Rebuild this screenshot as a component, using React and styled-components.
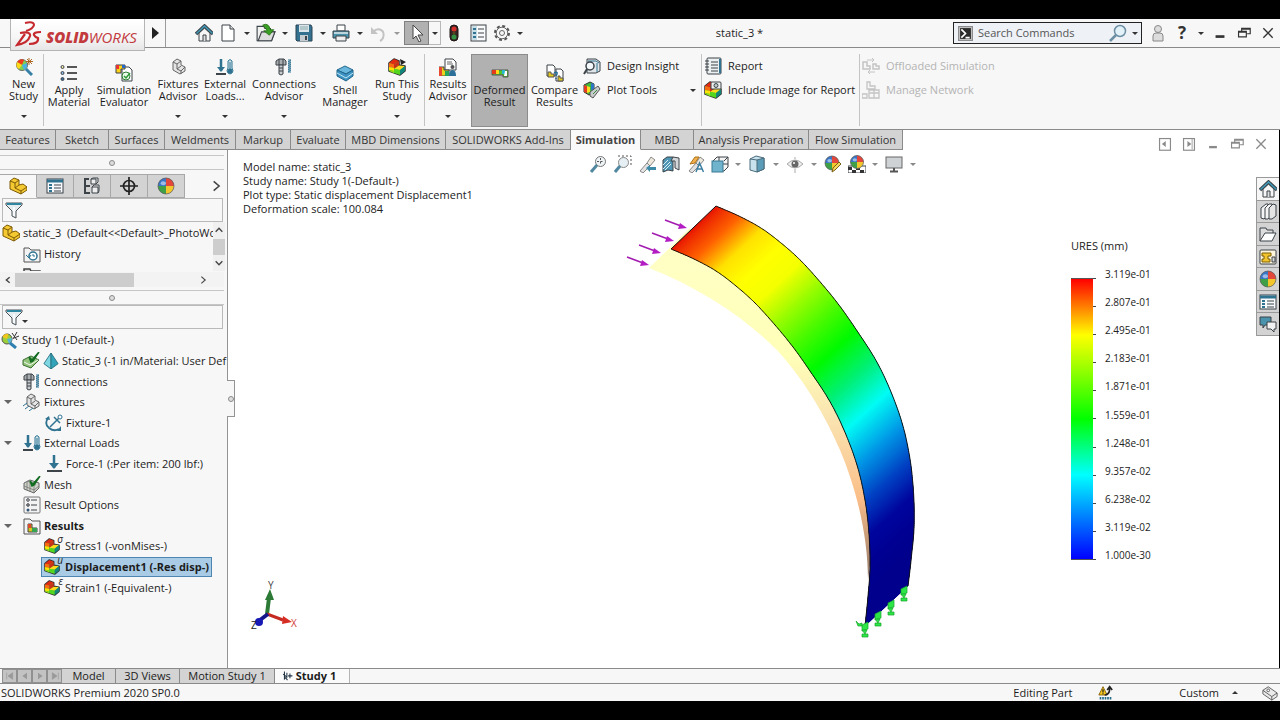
import React from "react";
import styled, { createGlobalStyle, css } from "styled-components";

const Global = createGlobalStyle`
  * { box-sizing: border-box; }
  body { margin: 0; background: #000; color: #1c1c1c; font-family: "Open Sans", "Noto Sans", sans-serif; font-size: 11px; line-height: 12px; }
  button, input { font: inherit; color: inherit; margin: 0; padding: 0; border: 0; background: none; }
  h1, p, ul { margin: 0; padding: 0; font: inherit; list-style: none; }
  svg { display: block; flex: none; }
`;

/* ---------- icons ---------- */

const K = "#3c4349";
const B = "#2f7391";
const rainbowCube = (
  <>
    <path d="M1 5L6 1l5 2v4l6 1v5l-5 4-11-4z" fill="#39c23a" stroke="#2c2c2c" strokeWidth="1.500" strokeLinejoin="round" />
    <path d="M1 5L6 1l5 2-5 3.500z" fill="#e02a12" />
    <path d="M1 5l5 1.500V10l-5-1z" fill="#ff6a10" />
    <path d="M1 9l5 1v3l-5-1z" fill="#ffe000" />
    <path d="M1 12l5 1v2.200L1 13z" fill="#8fdc1a" />
    <path d="M6 6.500L11 3v4.500L6 11z" fill="#c9301a" />
    <path d="M6 11l5-3.500 6 .5-5 4z" fill="#ffd91c" />
    <path d="M6 11l6 1v5l-6-2z" fill="#55d61e" />
    <path d="M12 12l5-4v5l-5 4z" fill="#12867a" />
  </>
);
const ball = (cx, cy, r) => (
  <>
    <circle cx={cx} cy={cy} r={r} fill="#e8e8e8" />
    <path d={`M${cx} ${cy}V${cy - r}A${r} ${r} 0 0 0 ${cx - r} ${cy}Z`} fill="#3a76c8" />
    <path d={`M${cx} ${cy}V${cy - r}A${r} ${r} 0 0 1 ${cx + r} ${cy}Z`} fill="#e3463a" />
    <path d={`M${cx} ${cy}V${cy + r}A${r} ${r} 0 0 1 ${cx - r} ${cy}Z`} fill="#3fa047" />
    <path d={`M${cx} ${cy}V${cy + r}A${r} ${r} 0 0 0 ${cx + r} ${cy}Z`} fill="#f3c62e" />
    <ellipse cx={cx - r / 3} cy={cy - r / 3} rx={r / 3} ry={r / 4} fill="#fff" opacity=".5" />
    <circle cx={cx} cy={cy} r={r} fill="none" stroke="#555" strokeWidth=".7" />
  </>
);
const bolt = (
  <>
    <path d="M1 3l3-2h5l2 2v4H1z" fill="#a9adb0" stroke={K} />
    <path d="M4 7h4v9l-2 1-2-1z" fill="#c9cccf" stroke={K} />
    <path d="M4 10h4M4 13h4M4 1v6M8 1v6" stroke={K} />
    <path d="M13 2h3l-3 2h3l-3 2h3l-3 2h3l-3 2h3l-3 2h3l-3 2h3" stroke={B} fill="none" />
  </>
);
const loads = (
  <>
    <path d="M5 1v12" stroke={B} strokeWidth="2.500" />
    <path d="M1 9h8l-4 5z" fill={B} />
    <path d="M0 16h10" stroke={K} strokeWidth="2" />
    <path d="M12 3q2-3 4 0v7q2 3 0 5t-4 0q-2-2 0-5z" fill="#cfe3ec" stroke={B} />
    <circle cx="14" cy="13" r="2.500" fill={B} />
    <path d="M14 4v9" stroke={B} />
  </>
);
const fixtures = (
  <>
    <path d="M4 4l4-3 4 2v4l4 2v4l-5 3-7-4z" fill="#e4e4e4" stroke="#666" />
    <path d="M4 4l4 2v5l4 2 4-4M8 6l4-3M8 11l4-3M12 13v3" fill="none" stroke="#666" />
  </>
);
const part = (
  <>
    <path d="M1 4l4-3 5 2v5l4-1 4 3v3l-6 4-11-5z" fill="#f4c932" stroke="#7d5a06" strokeLinejoin="round" />
    <path d="M1 4l5 2 4-3M6 6v5l6 3 6-4M6 11l4-3M12 14v3" fill="none" stroke="#7d5a06" />
  </>
);
const listDots = (
  <>
    <path d="M7 3h10M7 9h10M7 15h10" stroke="#222" strokeWidth="1.500" />
    <circle cx="2.500" cy="3" r="1.500" fill="#f5e5a0" stroke={K} />
    <circle cx="2.500" cy="9" r="1.500" fill="#8cb6de" stroke={K} />
    <circle cx="2.500" cy="15" r="1.500" fill="#356a9b" stroke={K} />
  </>
);
const sheet = (
  <>
    <rect x="1" y="2" width="16" height="14" fill="#f6fafc" stroke={K} />
    <path d="M1 4h16" stroke={B} strokeWidth="3" />
    <path d="M3 8h3M3 11h3M3 14h3" stroke={B} strokeWidth="2" />
    <path d="M8 8h7M8 11h7M8 14h7" stroke={K} />
  </>
);
const funnel = (
  <>
    <path d="M1 2h16v2l-6 6v7l-4-2v-5L1 4z" fill="#e4ecef" stroke="#4c5256" />
    <path d="M2 2h14v2H2z" fill="#2f86a0" />
    <path d="M9 6v9" stroke="#fff" strokeWidth="1.500" />
  </>
);
const house = (
  <>
    <path d="M4 9v8h11V9L9.500 4z" fill="#f6f6f6" stroke={K} />
    <path d="M1 10l8.500-8 8.500 8" fill="none" stroke={K} strokeWidth="3.500" />
    <path d="M1.500 9.500l8-7.500 8 7.500" fill="none" stroke="#3f9ab8" strokeWidth="1.500" />
    <path d="M8 17v-6h3v6" fill="#ddd" stroke={K} />
  </>
);
const meshBox = (
  <>
    <path d="M1 7l6-3 9 3v5l-5 5-10-4z" fill="#cfd2c8" stroke="#666" />
    <path d="M1 10l10 4 5-4M4 6v8M7 7v9M11 9v8M4 5l9 4" stroke="#777" strokeWidth=".8" fill="none" />
  </>
);
const check = <path d="M7 5l3 3 7-8-6 9-2 1z" fill="#1e9a32" stroke="#126b20" strokeWidth="1.500" />;
const beam = (
  <>
    <path d="M2 16l7-8 3 3-7 7z" fill="#e2e2e2" stroke="#888" />
    <path d="M9 8l4-6 4 3-5 6z" fill="#efe8dc" stroke="#888" />
  </>
);

const shapes = {
  home: house,
  newDoc: <><path d="M3 1h8l4 4v12H3z" fill="#fff" stroke={K} /><path d="M11 1v4h4" fill="#ddd" stroke={K} /></>,
  open: <><path d="M1 15V3h6l1 2h5v3h4l-3 8H1z" fill="#f2f2f0" stroke={K} /><path d="M2 16l3-8h12l-3 8z" fill="#ddd" stroke={K} /><path d="M6 2q5-3 7 4h3l-4 5-5-4h3q-1-3-4-5z" fill="#3aa024" stroke="#256b15" strokeWidth=".7" /></>,
  save: <><path d="M1 1h15l1 2v14H2l-1-1z" fill="#33718f" stroke="#2b4555" /><path d="M4 1h10v7H4z" fill="#dce6ea" /><path d="M5 3h8M5 5h8" stroke="#8aa" /><path d="M5 11h8v6H5z" fill="#c6cdd0" /><path d="M10 12h2v4h-2z" fill={K} /></>,
  print: <><path d="M5 1h8v6H5z" fill="#fff" stroke={K} /><path d="M1 7h16v7H1z" fill="#4a93ac" stroke={K} /><path d="M2 8h14v2H2z" fill="#bcd5dd" /><path d="M4 12h10v5H4z" fill="#eee" stroke={K} /></>,
  undo: <><path d="M4 8q4-4 8-2t2 8q-1 2-3 3" fill="none" stroke="#c3c3c3" strokeWidth="2" /><path d="M2 3v7h7z" fill="#c3c3c3" /></>,
  cursor: <path d="M5 1v14l3-3 3 6 2-1-3-6h5z" fill="#fff" stroke="#444" />,
  traffic: <><rect x="5" y="1" width="8" height="16" rx="4" fill="#352626" stroke="#201515" /><circle cx="9" cy="5" r="2.500" fill="#d3302c" /><circle cx="9" cy="9" r="1.500" fill="#574522" /><circle cx="9" cy="13" r="2.500" fill="#329142" /></>,
  options: <><rect x="2" y="1" width="15" height="16" fill="#f8fafb" stroke={K} /><path d="M3 2h5v14H3z" fill="#c8dee6" /><path d="M4 5h3M4 9h3M4 13h3" stroke={B} strokeWidth="2" /><path d="M9 5h6M9 9h6M9 13h6" stroke={K} /></>,
  gear: <><circle cx="9" cy="9" r="7" fill="none" stroke="#555" strokeWidth="2" strokeDasharray="3 2.498" /><circle cx="9" cy="9" r="5.800" fill="#f7f7f7" stroke="#666" /><circle cx="9" cy="9" r="2.500" fill="#f7f7f7" stroke="#666" /></>,
  prompt: <><rect x="0" y="0" width="18" height="18" fill="#8c8c8c" /><rect x="2" y="2" width="14" height="14" fill="#2a2a2a" stroke="#ddd" /><path d="M4 4l5 5-5 5M9 14h5" stroke="#fff" strokeWidth="2" fill="none" /></>,
  lens: <><circle cx="11" cy="7" r="5.500" fill="#e3f1f8" stroke="#6d8fa4" strokeWidth="1.500" /><path d="M7 11l-6 6" stroke="#6d8fa4" strokeWidth="2.500" /></>,
  user: <><circle cx="9" cy="5" r="3.500" fill="#ddd" stroke="#888" /><path d="M4 17v-5q0-3 3-3h4q3 0 3 3v5z" fill="#ddd" stroke="#888" /></>,
  minimize: <path d="M4 13h10" stroke="currentColor" strokeWidth="3" />,
  restore: <path d="M6 6V3h11v7h-4M2 7h10v7H2z M2 8h10M6 4h11" fill="none" stroke="currentColor" strokeWidth="1.500" />,
  close: <path d="M3 3l12 12M15 3L3 15" stroke="currentColor" strokeWidth="1.700" />,
  dockLeft: <><rect x="2" y="2" width="14" height="15" fill="none" stroke="currentColor" strokeWidth="1.500" /><path d="M5 9l5-4v8z" fill="currentColor" /></>,
  dockRight: <><rect x="2" y="2" width="14" height="15" fill="none" stroke="currentColor" strokeWidth="1.500" /><path d="M12 9L7 5v8z" fill="currentColor" /><path d="M13 2v14" stroke="currentColor" /></>,
  newStudy: <><circle cx="7" cy="7" r="5.500" fill="#7fd04f" stroke="#6b6b6b" /><path d="M7 7L2 4q3-4 7-2z" fill="#f33b1c" /><path d="M7 7l5-2q1 5-3 7z" fill="#4ab2e0" /><path d="M7 7L2 4q-2 5 2 7z" fill="#ffd91a" /><path d="M11 11l6 6" stroke="#3680a8" strokeWidth="3" /><path d="M14 0v7M11 3.500h7M12 1l5 5M17 1l-5 5" stroke="#a65b12" strokeWidth=".9" /></>,
  material: listDots,
  evaluator: <><path d="M7 3h7l3 3v11H7z" fill="#fff" stroke={K} /><path d="M1 1h9v4H6v4H1z" fill="#ffd21a" stroke={K} /><path d="M1 1h3v4H1z" fill="#e33" /><path d="M7 1h3v3H7z" fill="#2668c8" /><circle cx="11" cy="12" r="4" fill="#eafbe9" stroke="#2d7a35" /><path d="M9 12l2 2 4-5" stroke="#2d9a35" fill="none" strokeWidth="1.500" /></>,
  fixtures,
  loads,
  bolt,
  shell: <><path d="M1 6l8-4 8 4-7 4z" fill="#69b7dd" stroke="#22668c" /><path d="M1 6v6l9 5 7-5V6l-7 4z" fill="#3d93c1" stroke="#22668c" /><path d="M1 9l9 5 7-5" fill="none" stroke="#c3e6f6" /></>,
  run: <>{rainbowCube}<path d="M12 1l6 3-5 3z" fill="#222" /></>,
  advisor: <><path d="M6 1h8l3 3v8H6z" fill="#fff" stroke={K} /><path d="M8 4h5M8 6h6" stroke="#666" /><path d="M0 9h5v3h5v6H0z" fill="#e9d51c" stroke="#444" /><path d="M0 9h3v9H0z" fill="#e8492e" /><path d="M6 13h4v5H6z" fill="#29a35b" /><circle cx="13.500" cy="9" r="2" fill="#555" /><path d="M10 18q0-6 3.500-6t3.500 6z" fill="#2c6f9a" /></>,
  deformed: <><path d="M1 6h16v7h-5v-2H1z" fill="#4fc22d" stroke="#555" /><path d="M1 6h4v4H1z" fill="#e33a1c" /><path d="M5 6h3v4H5z" fill="#ffd91a" /><path d="M11 6h3v4h-3z" fill="#28b9cf" /><path d="M14 7h2v5h-3z" fill="#fff" /></>,
  compare: <><path d="M1 1h6l2 2v9H1z" fill="#fff" stroke={K} /><path d="M10 5h5l2 2v10h-7z" fill="#fff" stroke={K} /><path d="M2 8h3v2h3v3H2z" fill="#e5c81c" stroke="#555" /><path d="M12 12h2v2h3v3h-5z" fill="#e5c81c" stroke="#555" /><path d="M8 9q4-2 3 1l-1 2M10 14v1" stroke="#226f9b" fill="none" strokeWidth="1.500" /></>,
  insight: <><path d="M4 2h9l4 3v9l-4 2H4z" fill="#dfe5e8" stroke={K} /><path d="M5 4h8l3 2M14 6v9" stroke={B} fill="none" /><circle cx="7" cy="9" r="4" fill="#f3f8fb" stroke={K} strokeWidth="1.500" /><path d="M4 12l-3 5" stroke={K} strokeWidth="2" /></>,
  plotTools: <><path d="M1 4l6-3 4 2v7l-5 4-5-3z" fill="#42b93b" stroke="#333" /><path d="M1 4l3 1v7l-3-1z" fill="#e33b21" /><path d="M4 5l3 1v5l-3 1z" fill="#f9de22" /><path d="M8 2l3 1v6H8z" fill="#2f77c4" /><path d="M7 11l8-6 2 3-7 9-3-2z" fill="#c8cccd" stroke="#555" /><path d="M10 13l4-4" stroke="#3a8a3a" /></>,
  report: <><rect x="3" y="1" width="14" height="16" rx="1" fill="#ecf0f1" stroke={K} /><path d="M1 4h4M1 7h4M1 10h4M1 13h4" stroke={K} /><path d="M7 5h7M7 8h7M7 11h7M7 14h7" stroke={K} /><path d="M16 2v14" stroke={B} strokeWidth="2" /></>,
  image: <>{rainbowCube}<rect x="7" y="1" width="10" height="7" rx="1" fill="#eee" stroke={K} /><circle cx="12" cy="4.500" r="2" fill="#bcc" stroke={K} /></>,
  offload: <><path d="M1 5h4v4h3v3H1zM11 7h3v2h3v3h-6z" fill="none" stroke="#c4c4c4" strokeWidth="1.500" /><path d="M5 3h7M10 1l2 2-2 2M13 15H6M8 13l-2 2 2 2" stroke="#c4c4c4" fill="none" /></>,
  network: <><path d="M5 1h3v4h5v3H5zM7 9h10v3H7zM7 12h10v5H7zM12 9v8M0 13h5v4H0z" fill="none" stroke="#c4c4c4" strokeWidth="1.300" /></>,
  part,
  properties: sheet,
  config: <><path d="M2 1v16M2 2h4M2 9h5M2 16h5" stroke={K} strokeWidth="2" fill="none" /><path d="M8 2h5v5H8zM9 10h6v6H9zM8 2l2-1h5v4l-2 2M9 10l2-2h5v6l-1 2" fill="#eee" stroke={K} /></>,
  target: <><circle cx="9" cy="9" r="5.500" fill="none" stroke="#222" strokeWidth="1.700" /><path d="M9 0v18M0 9h18" stroke="#222" strokeWidth="1.700" /></>,
  ball: ball(9, 9, 8),
  funnel,
  history: <><path d="M1 3h5l2 2h9v12H1z" fill="#f3f3f3" stroke="#555" /><circle cx="10" cy="11" r="4" fill="#fff" stroke={B} strokeWidth="1.500" /><path d="M10 9v2h2M3 10l3 3 2-3" stroke={B} fill="none" /></>,
  folder: <><path d="M1 3h6l1 2h9v12H1z" fill="#ddd" stroke="#444" strokeWidth="1.500" /></>,
  study: <><circle cx="6" cy="8" r="5" fill="#9bd03a" stroke="#555" /><path d="M6 8L1.500 6q2-4 6-3z" fill="#f1c61c" /><path d="M6 8l5-1q0 4-3 5.500z" fill="#58b6d8" /><path d="M9 12l6 5" stroke="#2f7fb0" strokeWidth="3" /><path d="M11 2l5 7M16 1l-4 7M13 7l5-2" stroke="#333" /></>,
  solid: <><path d="M1 8l8-4 8 4-8 8-8-3z" fill="#93c47b" stroke="#3c6f33" /><path d="M2 10l6 3 8-5" fill="none" stroke="#f0f7ec" />{check}</>,
  tetra: <><path d="M9 0L1 12l8 6z" fill="#7fd6e3" stroke="#26707f" /><path d="M9 0l8 12-8 6z" fill="#34a3ba" stroke="#26707f" /></>,
  fixtureTree: <>{fixtures}<path d="M0 13l4-3M2 16l4-3M6 18l4-3" stroke={B} /></>,
  anchor: <><path d="M3 4q-4 6 1 10t10 1" stroke={B} fill="none" strokeWidth="1.800" /><path d="M0 5l4-3 1 4zM16 12v5h-4z" fill={B} /><path d="M5 13L15 3M9 3l6 6" stroke={B} strokeWidth="1.500" /><circle cx="15" cy="3" r="2" fill="#fff" stroke={B} /></>,
  force: <><path d="M9 0v13" stroke={B} strokeWidth="2.500" /><path d="M4 8l5 6 5-6z" fill={B} /><path d="M2 16h15" stroke={K} strokeWidth="2" /></>,
  mesh: <>{meshBox}{check}</>,
  resultOptions: <><rect x="1" y="1" width="16" height="16" rx="1" fill="#f3f3f3" stroke="#777" /><path d="M8 4h6M8 9h6M8 14h6" stroke={K} /><circle cx="5" cy="4" r="1.300" fill="#eee" stroke={K} /><circle cx="5" cy="9" r="1.300" fill="#aaa" stroke={K} /><circle cx="5" cy="14" r="1.500" fill="#357" /></>,
  results: <><path d="M1 2h6l2 2h8v13H1z" fill="#f3f3f3" stroke="#555" /><path d="M5 7h4v4h5v4H5z" fill="#d6c51f" stroke="#444" /><path d="M5 7h3v4H5z" fill="#de4b28" /><path d="M9 11h5v4H9z" fill="#37a454" /></>,
  cube: rainbowCube,
  zoomFit: <><circle cx="11.500" cy="6.500" r="5" fill="#eef3f5" stroke="#777" /><path d="M11.500 3v7M8 6.500h7" stroke="#555" strokeDasharray="2 1.500" /><path d="M8 10l-6 7" stroke="#52889f" strokeWidth="3" /></>,
  zoomArea: <><circle cx="9.500" cy="7.500" r="5" fill="#e6eff4" stroke="#888" /><path d="M6 11l-5 6" stroke="#52889f" strokeWidth="3" /><path d="M4 1h13v11" stroke="#555" strokeDasharray="2 2" fill="none" /></>,
  prevView: <>{beam}<path d="M8 13l4-3v2h6v3h-6v2z" fill="#3c89a8" /></>,
  section: <><path d="M1 5l4-3 6 0v14l-5-1-5 2z" fill="#4f97b4" stroke={K} /><path d="M11 2l6 1v12l-4-2V6l-4 0z" fill="#d4d7d9" stroke={K} /><path d="M1 10l5-5M1 14l7-7M3 15l6-6" stroke="#d9edf5" /></>,
  annotate: <>{beam}<path d="M3 9l5-7h4L8 8z" fill="#f0b24e" stroke="#b07214" /><path d="M9 17l3.500-9 4 9M10.500 14h5" stroke="#3c7fa0" strokeWidth="1.500" fill="none" /></>,
  orient: <><path d="M2 6l4-4h11v10l-4 4H2z" fill="#f4f4f4" stroke={K} /><path d="M17 2l-4 4M8 2v4M6 9h11" stroke={K} /><rect x="1" y="6" width="11" height="11" fill="#6fb3cd" stroke="#3a7893" /></>,
  display: <><path d="M2 4l6-3 8 2v11l-7 3-7-2z" fill="#c9e3ee" stroke="#4a6b7b" /><path d="M9 5l7-2v11l-7 3z" fill="#5b9db8" stroke="#4a6b7b" /><path d="M2 4l7 1" stroke="#4a6b7b" /></>,
  eye: <><path d="M1 9q8-8 16 0-8 8-16 0z" fill="#eee" stroke="#aaa" /><circle cx="9" cy="9" r="3.500" fill="#666" /><circle cx="8" cy="8" r="1" fill="#fff" /><path d="M9 2v2M9 14v4" stroke="#aaa" /></>,
  appearance: <>{ball(8, 8, 7)}<path d="M8 17l1-4 6-6 2 2-6 6z" fill="#f5d75b" stroke="#7a6017" /></>,
  scene: <><path d="M0 11h18v7H0z" fill="#fff" stroke={K} /><path d="M0 12h4v3H0zM8 12h4v3H8zM4 15h4v3H4zM12 15h4v3h-4z" fill="#333" />{ball(9, 7, 6.5)}</>,
  monitor: <><rect x="1" y="2" width="16" height="11" fill="#cfd2d4" stroke="#666" /><path d="M9 13v3M5 16.500h8" stroke="#555" strokeWidth="2" /></>,
  library: <><path d="M2 6l5-4 2 0v11l-4 4-3-1z" fill="#f4f4f4" stroke={K} /><path d="M6 6l4-4h3v11l-4 4H6z" fill="#f4f4f4" stroke={K} /><path d="M10 6l4-4 3 1v11l-4 3h-3z" fill="#e4e4e4" stroke={K} /></>,
  openFolder: <><path d="M1 16V3h6l1 2h6v3" fill="#ddd" stroke={K} /><path d="M1 16l5-8h11l-4 8z" fill="#fff" stroke={K} /></>,
  palette: <><rect x="1" y="2" width="16" height="14" rx="1" fill="#fdf6dd" stroke={K} /><path d="M3 5h9v3H9v3h2v3H3v-3h2V8H3z" fill="#f2c52e" stroke="#7a5c00" /><path d="M13 9h3v5h-3z" fill="#d8d8d8" stroke={K} /></>,
  chat: <><path d="M1 2h11v8H6l-2 3v-3H1z" fill="#4a93ac" stroke={K} /><path d="M8 7h9v7h-2v3l-3-3H8z" fill="#f1f1f1" stroke={K} /></>,
  alert: <><path d="M1 12L6 2l5 10z" fill="#f8c81c" stroke="#7a5700" /><path d="M6 5v4M6 10v1" stroke="#222" strokeWidth="1.500" /><path d="M8 12q6 0 6-8M11 6l3-4 3 4" fill="none" stroke="#222" strokeWidth="2" /><path d="M2 16h14" stroke="#256b8a" strokeWidth="3" strokeDasharray="2 1" /></>,
  tag: <><path d="M1 6l6-4 10 7v4l-6 4L1 10z" fill="#eaeaea" stroke="#555" /><path d="M1 6l10 7 6-4M11 13v4" fill="none" stroke="#555" /><circle cx="7" cy="6" r="1.500" fill="#fff" stroke="#555" /></>,
  spark: <path d="M4 1v12l2-2 3 4M2 5l6 5M8 3v8M13 4v8M10 8h7" stroke="#234" strokeWidth="1.700" fill="none" />,
  chevronR: <path d="M6 3l7 6-7 6" fill="none" stroke="#444" strokeWidth="2" />,
  chevronL: <path d="M12 4L6 9l6 5" fill="none" stroke="#444" strokeWidth="2.500" />,
  chevronU: <path d="M3 12l6-6 6 6" fill="none" stroke="#444" strokeWidth="2.500" />,
  chevronD: <path d="M3 6l6 6 6-6" fill="none" stroke="#444" strokeWidth="2.500" />,
  first: <path d="M4 4v10M13 4v10L6 9z" fill="#999" stroke="#999" />,
  prev: <path d="M12 4v10L5 9z" fill="#999" />,
  next: <path d="M6 4v10l7-5z" fill="#999" />,
  last: <path d="M14 4v10M5 4v10l7-5z" fill="#999" stroke="#999" />,
};

const Icon = ({ name, size = 18 }) => (
  <svg width={size} height={size} viewBox="0 0 18 18" fill="none" aria-hidden="true">{shapes[name]}</svg>
);

const Caret = styled.span`
  width: 0; height: 0; flex: none;
  border: 3px solid transparent;
  border-bottom-width: 0;
  border-top-color: ${(p) => p.$color || "#333"};
`;

/* ---------- frame ---------- */

const Screen = styled.div`
  min-height: 100vh; padding: 19px 0; background: #000;
  display: flex; flex-direction: column;
`;
const Window = styled.div`
  flex: 1; background: #f7f7f7; display: flex; flex-direction: column;
`;

/* ---------- title bar ---------- */

const TitleBar = styled.header`
  position: relative; height: 29px; display: flex; align-items: center;
  border-bottom: 1px solid #8a8a8a;
`;
const Brand = styled.div`
  position: relative; z-index: 1; align-self: flex-start; flex: none;
  width: 135px; height: 32px; margin-left: 10px; padding-left: 4px;
  display: flex; align-items: center; gap: 3px;
  background: linear-gradient(#fff, #f6f6f6 60%, #e6e6e6);
  border: 1px solid #b4b4b4; border-top: 0;
`;
const BrandName = styled.span`
  padding-top: 4px; font-style: italic; font-size: 15px; line-height: 20px; color: #c23a3e;
  b { font-weight: 800; }
`;
const MenuArrow = styled.button`
  width: 21px; height: 28px; border-right: 1px solid #9a9a9a;
  display: grid; place-items: center;
`;
const QuickTools = styled.div`
  display: flex; align-items: center; margin-left: 26px;
`;
const ToolButton = styled.button`
  display: grid; place-items: center; height: 24px;
  width: ${(p) => p.$w || 24}px;
  color: ${(p) => p.$color || "#333"};
  ${(p) => p.$pressed && css`background: #b1b1b1; border: 1px solid #808080;`}
  ${(p) => p.$boxed && css`border: 1px solid #b8b8b8; border-left: 0;`}
`;
const DocTitle = styled.h1`
  flex: 1; text-align: center; white-space: nowrap;
`;
const SearchBox = styled.div`
  width: 189px; height: 22px; display: flex; align-items: center; gap: 5px; padding: 0 3px 0 4px;
  border: 1px solid #222; background: #eef1f6;
  input { flex: 1; min-width: 0; outline: 0; }
  input::placeholder { color: #555; opacity: 1; }
`;
const WindowTools = styled.div`
  display: flex; align-items: center; padding-left: 4px; font-size: 17px; font-weight: 700;
`;

/* ---------- ribbon ---------- */

const Ribbon = styled.div`
  height: 82px; padding: 6px 0 3px; display: flex; border-bottom: 1px solid #8a8a8a;
`;
const Divider = styled.div`width: 1px; background: #c4c4c4;`;
const BigButton = styled.button`
  width: ${(p) => p.$w}px; height: 73px; padding-top: ${(p) => (p.$menu ? 4 : 10)}px;
  display: flex; flex-direction: column; align-items: center; gap: 2px; text-align: center;
  &:first-child { padding-left: 4px; }
  ${(p) => p.$pressed && css`background: #b1b1b1; border: 1px solid #8c8c8c; padding-top: 9px;`}
  ${Caret} { margin-top: 11px; }
`;
const BigLabel = styled.span`display: block; height: 24px; white-space: pre;`;
const Stack = styled.div`
  width: ${(p) => p.$w}px; padding-left: 2px; display: flex; flex-direction: column;
`;
const SmallButton = styled.button`
  height: 24px; display: flex; align-items: center; gap: 6px; white-space: nowrap; text-align: left;
  color: ${(p) => (p.disabled ? "#b4b4b4" : "#1c1c1c")};
  ${Caret} { margin-left: auto; margin-right: 5px; }
`;

const ribbonButtons = [
  { label: "New\nStudy", icon: "newStudy", w: 43, menu: true },
  null,
  { label: "Apply\nMaterial", icon: "material", w: 50 },
  { label: "Simulation\nEvaluator", icon: "evaluator", w: 60 },
  { label: "Fixtures\nAdvisor", icon: "fixtures", w: 48, menu: true },
  { label: "External\nLoads...", icon: "loads", w: 46, menu: true },
  { label: "Connections\nAdvisor", icon: "bolt", w: 72, menu: true },
  { label: "Shell\nManager", icon: "shell", w: 50 },
  { label: "Run This\nStudy", icon: "run", w: 54, menu: true },
  null,
  { label: "Results\nAdvisor", icon: "advisor", w: 46, menu: true },
  { label: "Deformed\nResult", icon: "deformed", w: 57, pressed: true },
  { label: "Compare\nResults", icon: "compare", w: 53 },
];

/* ---------- command tabs ---------- */

const TabRow = styled.div`
  height: 20px; display: flex; background: #fff; border-right: 1px solid #000;
`;
const Tab = styled.button`
  width: ${(p) => p.$w}px; height: 20px; white-space: nowrap; color: #333;
  background: #d3d3d3; border-right: 1px solid #8a8a8a; border-bottom: 1px solid #8a8a8a;
  ${(p) => p.$active && css`background: #f9f9f9; font-weight: 700; border-bottom-color: #f9f9f9; color: #444;`}
`;
const DocTools = styled.div`
  margin-left: auto; margin-bottom: -6px; align-self: flex-end; display: flex; padding-right: 6px;
  position: relative; z-index: 1;
`;
const commandTabs = [
  ["Features", 56], ["Sketch", 53], ["Surfaces", 56], ["Weldments", 71], ["Markup", 55], ["Evaluate", 55],
  ["MBD Dimensions", 100], ["SOLIDWORKS Add-Ins", 125], ["Simulation", 70], ["MBD", 53],
  ["Analysis Preparation", 115], ["Flow Simulation", 94],
];

/* ---------- left panel ---------- */

const Workspace = styled.main`
  flex: 1; display: flex; border-right: 1px solid #000;
`;
const SidePanel = styled.aside`
  position: relative; z-index: 1; width: 228px; flex: none; border-right: 1px solid #949494; background: #f7f7f7;
`;
const Splitter = styled.div`
  height: 15px; margin: ${(p) => p.$gap}px 3px 0 0; display: grid; place-items: center;
  border: solid #c6c6c6; border-width: 1px 0;
`;
const Knob = styled.span`
  width: 6px; height: 6px; border: 1px solid #8a8a8a; border-radius: 50%; background: #ddd;
`;
const PanelTabs = styled.div`
  display: flex; padding-top: 4px; height: 28px;
  ${ToolButton} { margin-left: auto; }
`;
const PanelTab = styled.button`
  width: 37px; height: 24px; flex: none; display: grid; place-items: center;
  border: 1px solid #a8a8a8; border-left: 0;
  background: ${(p) => (p.$active ? "#f7f7f7" : "#d3d3d3")};
  ${(p) => p.$active && css`border-bottom-color: #f7f7f7;`}
`;
const Filter = styled.label`
  height: 24px; margin: 0 4px 0 2px; padding-left: 2px; display: flex; align-items: center; gap: 1px;
  border: 1px solid #b9b9b9;
  input { flex: 1; min-width: 0; height: 20px; outline: 0; }
  ${Caret} { margin-top: 8px; margin-left: -2px; }
`;
const TreeClip = styled.div`
  display: flex; height: 49px; padding-right: 2px;
  ul { flex: 1; min-width: 0; overflow: hidden; }
`;
const VScroll = styled.div`
  width: 12px; background: #f0f0f0; display: flex; flex-direction: column; align-items: center;
  justify-content: space-between; padding: 3px 0;
`;
const VThumb = styled.div`width: 12px; height: 16px; background: #cdcdcd;`;
const HScroll = styled.div`
  height: 15px; margin: 1px 3px 0 0; padding-right: 14px; display: flex; align-items: center; background: #f3f3f3;
  ${ToolButton} { height: 15px; }
`;
const HThumb = styled.div`width: 119px; height: 14px; margin-right: auto; background: #cdcdcd;`;
const Row = styled.li`
  display: flex; align-items: center; height: 21px; gap: 3px; white-space: nowrap;
  padding-left: ${(p) => p.$indent}px;
`;
const StudyTree = styled.ul`
  height: 268px; margin-top: 1px; overflow: hidden; display: flex; flex-direction: column;
  ${Row} { flex: 1; min-height: 0; position: relative; }
`;
const Expander = styled(Caret)`
  position: absolute; left: 4px; border-width: 4px; border-bottom-width: 0; border-top-color: #666;
`;
const Pick = styled.span`
  display: flex; align-items: center; gap: 3px; height: 20px; margin-left: -4px; padding: 0 2px 0 2px; border: 1px solid transparent;
  ${(p) => p.$selected && css`background: #a9cbe6; border-color: #4d86b0;`}
`;
const Label = styled.span`font-weight: ${(p) => (p.$bold ? 700 : 400)};`;
const PlotIcon = styled.span`
  position: relative; padding-right: 2px;
  i { position: absolute; right: -1px; top: -4px; font-size: 10px; line-height: 10px; }
`;
const CollapseHandle = styled.button`
  position: absolute; right: -8px; top: 230px; width: 8px; height: 37px;
  display: grid; place-items: center;
  background: #f7f7f7; border: 1px solid #949494; border-left: 0;
`;

const study = [
  { text: "Study 1 (-Default-)", icon: "study", indent: 1 },
  { text: "Static_3 (-1 in/Material: User Def", icon: "solid", icon2: "tetra", indent: 22 },
  { text: "Connections", icon: "bolt", indent: 23 },
  { text: "Fixtures", icon: "fixtureTree", indent: 23, open: true },
  { text: "Fixture-1", icon: "anchor", indent: 45 },
  { text: "External Loads", icon: "loads", indent: 23, open: true },
  { text: "Force-1 (:Per item: 200 lbf:)", icon: "force", indent: 45 },
  { text: "Mesh", icon: "mesh", indent: 23 },
  { text: "Result Options", icon: "resultOptions", indent: 23 },
  { text: "Results", icon: "results", indent: 23, open: true, bold: true },
  { text: "Stress1 (-vonMises-)", mark: "σ", indent: 45 },
  { text: "Displacement1 (-Res disp-)", mark: "u", indent: 45, bold: true, selected: true },
  { text: "Strain1 (-Equivalent-)", mark: "ε", indent: 45 },
];

/* ---------- viewport ---------- */

const Viewport = styled.section`
  position: relative; flex: 1; min-width: 0; min-height: 518px; overflow: hidden; background: #fff;
`;
const StudyInfo = styled.div`
  position: absolute; left: 15px; top: 10px; line-height: 14px; color: #222;
`;
const ViewTools = styled.div`
  position: absolute; left: 358px; top: 2px; display: flex; align-items: center;
`;
const ModelCanvas = styled.svg`position: absolute; left: 388px; top: 40px;`;
const Triad = styled.svg`
  position: absolute; left: 21px; bottom: 34px;
`;
const Legend = styled.div`
  position: absolute; right: 96px; top: 90px; width: 112px; color: #222;
`;
const LegendBody = styled.div`display: flex; margin-top: 8px; font-size: 10px;`;
const Scale = styled.div`
  width: 22px; height: 282px; margin-top: 18px;
  border: 1px solid #555; border-width: 1px 0;
  background: linear-gradient(#ff0000 0%, #ff8000 10%, #ffff00 20%, #00ff00 50%, #00ffff 70%, #0000ff 100%);
`;
const Ticks = styled.div`
  width: 3px; height: 282px; margin-top: 18px; display: flex; flex-direction: column; justify-content: space-between;
  span { height: 1px; background: #444; }
`;
const Values = styled.ul`
  height: 309px; margin-left: 9px; display: flex; flex-direction: column;
  li { flex: 1; display: flex; align-items: center; }
`;
const TaskPane = styled.nav`
  position: absolute; right: 0; top: 27px; width: 23px; height: 159px;
  display: flex; flex-direction: column; border: 1px solid #999; border-right: 0;
`;
const TaskButton = styled.button`
  flex: 1; display: grid; place-items: center;
  background: ${(p) => (p.$active ? "#f7f7f7" : "#d3d3d3")};
  border-bottom: 1px solid #999;
  &:last-child { border-bottom: 0; }
`;

const viewTools = [
  ["zoomFit", 24], ["zoomArea", 25], ["prevView", 24], ["section", 24], ["annotate", 25], ["orient", 24, 12],
  ["display", 26, 12], ["eye", 26, 12], ["appearance", 25], ["scene", 24, 12], ["monitor", 26, 12],
];
const values = ["3.119e-01", "2.807e-01", "2.495e-01", "2.183e-01", "1.871e-01", "1.559e-01", "1.248e-01", "9.357e-02", "6.238e-02", "3.119e-02", "1.000e-30"];

/* Near edge of the deformed strip, with the displacement colour at each point. */
const nearEdge = [
  [671, 249, [232, 20, 0]], [694, 259, [255, 100, 0]], [716, 271, [255, 225, 0]],
  [736, 286, [255, 255, 0]], [755, 303, [245, 255, 0]], [775, 325, [150, 252, 0]], [793, 347, [70, 250, 0]],
  [810, 371, [0, 250, 0]], [829, 400, [0, 240, 120]], [844, 430, [0, 252, 245]],
  [857, 465, [0, 150, 230]], [865, 500, [0, 65, 195]], [869, 534, [0, 5, 158]], [870, 567, [0, 0, 145]],
  [868, 596, [0, 0, 140]], [865, 626, [0, 0, 140]],
];
const spline = (a, b, c, d, t) =>
  0.5 * (2 * b + (c - a) * t + (2 * a - 5 * b + 4 * c - d) * t * t + (3 * b - a - 3 * c + d) * t * t * t);
const samples = [];
for (let i = 0; i < nearEdge.length - 1; i++) {
  const p = [nearEdge[Math.max(0, i - 1)], nearEdge[i], nearEdge[i + 1], nearEdge[Math.min(nearEdge.length - 1, i + 2)]];
  for (let k = 0; k < 16; k++) {
    const t = k / 16;
    const along = (i + t) / (nearEdge.length - 1);
    const x = spline(p[0][0], p[1][0], p[2][0], p[3][0], t) - 616;
    const y = spline(p[0][1], p[1][1], p[2][1], p[3][1], t) - 190;
    samples.push({
      x, y, fx: x + 45 + 2 * Math.sin(Math.PI * along) - 2 * along, fy: y - 43 + 3 * along,
      color: p[1][2].map((v, n) => Math.round(v + (p[2][2][n] - v) * t)),
    });
  }
}
samples.push({ x: 249, y: 436, fx: 292, fy: 396, color: [0, 0, 140] });
const path = (pts) => "M" + pts.map(([x, y]) => `${x.toFixed(1)} ${y.toFixed(1)}`).join("L");
const outline = path([...samples.map((s) => [s.x, s.y]).reverse(), ...samples.map((s) => [s.fx, s.fy])]);

const Model = () => (
  <ModelCanvas width="310" height="456" viewBox="0 0 310 456" role="img" aria-label="Displacement plot">
    <defs>
      <linearGradient id="ghost" x1="0" y1="70" x2="0" y2="390" gradientUnits="userSpaceOnUse">
        <stop offset="0" stopColor="#ffffc4" /><stop offset=".3" stopColor="#ffffb8" />
        <stop offset=".5" stopColor="#fae3b0" /><stop offset=".75" stopColor="#fabd88" /><stop offset="1" stopColor="#8f7768" />
      </linearGradient>
    </defs>
    <path d="M33 78C84 98 128 127 161 160C192 194 212 232 224 260C240 298 252 345 252 390L258 344L256 310L250 272L238 238L222 206L203 177L186 153L167 130L147 108L128 91L108 76L86 62L74 38Z" fill="url(#ghost)" />
    {samples.slice(0, -1).map((s, i) => {
      const n = samples[Math.min(i + 4, samples.length - 1)];
      const middle = samples[Math.min(i + 2, samples.length - 1)];
      const d = path([[s.x, s.y], [middle.x, middle.y], [n.x, n.y], [n.fx, n.fy], [middle.fx, middle.fy], [s.fx, s.fy]]) + "Z";
      return <path key={i} d={d} fill={`rgb(${s.color.join(",")})`} />;
    })}
    <path d={outline} fill="none" stroke="#111" strokeWidth="1" />
    {[[49, 30], [36, 43], [23, 55], [11, 67]].map(([x, y]) => (
      <g key={x} transform={`translate(${x} ${y})`}>
        <path d="M0 0L16 6" stroke="#a21ab0" strokeWidth="1.500" />
        <path d="M15 3L22 8L13 9Z" fill="#b41cc4" />
      </g>
    ))}
    {[[249, 438], [262, 427], [275, 416], [288, 402]].map(([x, y], i) => (
      <g key={x} transform={`translate(${x} ${y})`} stroke="#16a52a" strokeWidth=".7" fill="#2ee548">
        <path d="M-3 -3L3 -6L3 1L-3 3Z" />
        <path d="M-3 2L2 2L0 6ZM-3 6H3V9H-3Z" />
        {i === 0 && <path d="M-9 -7L-6 -4L-3 -5L-3 -2L-7 -2Z" />}
      </g>
    ))}
  </ModelCanvas>
);

/* ---------- bottom ---------- */

const BottomTabs = styled.div`
  height: 16px; display: flex; border: solid #8a8a8a; border-width: 1px 0; padding-left: 2px;
`;
const PageButton = styled.button`
  width: 15px; height: 14px; display: grid; place-items: center; background: #c3c3c3; border: 1px solid #909090;
`;
const BottomTab = styled.button`
  width: ${(p) => p.$w}px; height: 14px; display: flex; align-items: center; justify-content: center; gap: 3px;
  white-space: nowrap; background: #d3d3d3; border-right: 1px solid #8a8a8a;
  ${(p) => p.$active && css`background: #fafafa; font-weight: 700; border-right-color: #b5b5b5; padding-right: 6px;`}
`;
const StatusBar = styled.footer`
  height: 17px; display: flex; align-items: center; padding: 0 2px 0 1px; white-space: nowrap;
  p { margin-right: auto; }
`;
const StatusItem = styled.button`
  display: flex; align-items: center; gap: 13px; margin-left: ${(p) => p.$gap}px;
  ${Caret} { transform: rotate(180deg); }
`;

export default function App() {
  return (
    <Screen>
      <Global />
      <Window>
        <TitleBar>
          <Brand>
            <svg width="28" height="27" viewBox="0 0 28 27" fill="none" stroke="#c5282d" aria-hidden="true">
              <path d="M10 2Q19 0 19 4Q18 8 11 10" strokeWidth="2" />
              <path d="M5 12Q16 10 15 15Q13 22 2 24L10 13" strokeWidth="2.200" />
              <path d="M26 11Q18 11 19 14Q20 16 23 17Q24 23 14 23" strokeWidth="2.200" />
            </svg>
            <BrandName><b>SOLID</b>WORKS</BrandName>
          </Brand>
          <MenuArrow aria-label="Menu"><svg width="7" height="12" viewBox="0 0 7 12"><path d="M0 0l7 6-7 6z" fill="#222" /></svg></MenuArrow>
          <QuickTools>
            <ToolButton aria-label="Home"><Icon name="home" /></ToolButton>
            <ToolButton aria-label="New"><Icon name="newDoc" /></ToolButton>
            <ToolButton $w={14} aria-label="New options"><Caret /></ToolButton>
            <ToolButton aria-label="Open"><Icon name="open" size={20} /></ToolButton>
            <ToolButton $w={14} aria-label="Open options"><Caret /></ToolButton>
            <ToolButton aria-label="Save"><Icon name="save" /></ToolButton>
            <ToolButton $w={13} aria-label="Save options"><Caret /></ToolButton>
            <ToolButton aria-label="Print"><Icon name="print" /></ToolButton>
            <ToolButton $w={13} aria-label="Print options"><Caret /></ToolButton>
            <ToolButton aria-label="Undo"><Icon name="undo" /></ToolButton>
            <ToolButton $w={14} aria-label="Undo options"><Caret $color="#999" /></ToolButton>
            <ToolButton $pressed $w={25} aria-label="Select"><Icon name="cursor" /></ToolButton>
            <ToolButton $boxed $w={12} aria-label="Select options"><Caret /></ToolButton>
            <ToolButton $w={25} aria-label="Rebuild"><Icon name="traffic" /></ToolButton>
            <ToolButton aria-label="File properties"><Icon name="options" /></ToolButton>
            <ToolButton aria-label="Options"><Icon name="gear" /></ToolButton>
            <ToolButton $w={12} aria-label="More options"><Caret /></ToolButton>
          </QuickTools>
          <DocTitle>static_3 *</DocTitle>
          <SearchBox>
            <Icon name="prompt" size={15} />
            <input type="text" aria-label="Search Commands" placeholder="Search Commands" />
            <Icon name="lens" />
            <Caret />
          </SearchBox>
          <WindowTools>
            <ToolButton aria-label="Account"><Icon name="user" /></ToolButton>
            <ToolButton aria-label="Help">?</ToolButton>
            <ToolButton $w={14} aria-label="Help options"><Caret /></ToolButton>
            <ToolButton aria-label="Minimize"><Icon name="minimize" size={16} /></ToolButton>
            <ToolButton aria-label="Restore"><Icon name="restore" size={14} /></ToolButton>
            <ToolButton aria-label="Close"><Icon name="close" size={14} /></ToolButton>
          </WindowTools>
        </TitleBar>

        <Ribbon>
          {ribbonButtons.map((b, i) =>
            b === null ? <Divider key={i} /> : (
              <BigButton key={i} $w={b.w} $menu={b.menu} $pressed={b.pressed}>
                <Icon name={b.icon} />
                <BigLabel>{b.label}</BigLabel>
                {b.menu && <Caret />}
              </BigButton>
            )
          )}
          <Stack $w={120}>
            <SmallButton><Icon name="insight" />Design Insight</SmallButton>
            <SmallButton><Icon name="plotTools" />Plot Tools<Caret /></SmallButton>
          </Stack>
          <Divider />
          <Stack $w={157}>
            <SmallButton><Icon name="report" />Report</SmallButton>
            <SmallButton><Icon name="image" />Include Image for Report</SmallButton>
          </Stack>
          <Divider />
          <Stack $w={160}>
            <SmallButton disabled><Icon name="offload" />Offloaded Simulation</SmallButton>
            <SmallButton disabled><Icon name="network" />Manage Network</SmallButton>
          </Stack>
        </Ribbon>

        <TabRow>
          {commandTabs.map(([name, w]) => <Tab key={name} $w={w} $active={name === "Simulation"}>{name}</Tab>)}
          <DocTools>
            <ToolButton $color="#8a8a8a" aria-label="Dock left"><Icon name="dockLeft" size={14} /></ToolButton>
            <ToolButton $color="#8a8a8a" aria-label="Dock right"><Icon name="dockRight" size={14} /></ToolButton>
            <ToolButton $color="#8a8a8a" aria-label="Minimize document"><Icon name="minimize" size={14} /></ToolButton>
            <ToolButton $color="#8a8a8a" aria-label="Restore document"><Icon name="restore" size={14} /></ToolButton>
            <ToolButton $color="#8a8a8a" aria-label="Close document"><Icon name="close" size={14} /></ToolButton>
          </DocTools>
        </TabRow>

        <Workspace>
          <SidePanel>
            <Splitter $gap={5}><Knob /></Splitter>
            <PanelTabs>
              {["part", "properties", "config", "target", "ball"].map((n) => (
                <PanelTab key={n} $active={n === "part"} aria-label={n}><Icon name={n} /></PanelTab>
              ))}
              <ToolButton $w={22} aria-label="More tabs"><Icon name="chevronR" size={14} /></ToolButton>
            </PanelTabs>
            <Filter><Icon name="funnel" /><input type="text" aria-label="Filter features" /></Filter>
            <TreeClip>
              <ul>
                <Row $indent={2}><Icon name="part" />static_3&nbsp; (Default&lt;&lt;Default&gt;_PhotoWo</Row>
                <Row $indent={23}><Icon name="history" />History</Row>
                <Row $indent={23}><Icon name="folder" />Sensors</Row>
              </ul>
              <VScroll>
                <Icon name="chevronU" size={10} /><VThumb /><Icon name="chevronD" size={10} />
              </VScroll>
            </TreeClip>
            <HScroll>
              <ToolButton $w={15} aria-label="Scroll left"><Icon name="chevronL" size={10} /></ToolButton>
              <HThumb />
              <ToolButton $w={15} aria-label="Scroll right"><Icon name="chevronR" size={10} /></ToolButton>
            </HScroll>
            <Splitter $gap={3}><Knob /></Splitter>
            <Filter><Icon name="funnel" /><Caret /><input type="text" aria-label="Filter study" /></Filter>
            <StudyTree>
              {study.map((r) => (
                <Row key={r.text} $indent={r.indent}>
                  {r.open && <Expander />}
                  {r.mark ? (
                    <Pick $selected={r.selected}>
                      <PlotIcon><Icon name="cube" size={16} /><i>{r.mark}</i></PlotIcon>
                      <Label $bold={r.bold}>{r.text}</Label>
                    </Pick>
                  ) : (
                    <>
                      <Icon name={r.icon} />
                      {r.icon2 && <Icon name={r.icon2} size={16} />}
                      <Label $bold={r.bold}>{r.text}</Label>
                    </>
                  )}
                </Row>
              ))}
            </StudyTree>
            <CollapseHandle aria-label="Collapse panel"><Knob /></CollapseHandle>
          </SidePanel>

          <Viewport>
            <StudyInfo>
              <p>Model name: static_3</p>
              <p>Study name: Study 1(-Default-)</p>
              <p>Plot type: Static displacement Displacement1</p>
              <p>Deformation scale: 100.084</p>
            </StudyInfo>
            <Model />
            <ViewTools>
              {viewTools.map(([name, w, menu]) => (
                <React.Fragment key={name}>
                  <ToolButton $w={w} aria-label={name}><Icon name={name} /></ToolButton>
                  {menu && <ToolButton $w={menu} aria-label={name + " options"}><Caret $color="#888" /></ToolButton>}
                </React.Fragment>
              ))}
            </ViewTools>
            <Legend>
              <p>URES (mm)</p>
              <LegendBody>
                <Scale />
                <Ticks>{values.map((v) => <span key={v} />)}</Ticks>
                <Values>{values.map((v) => <li key={v}>{v}</li>)}</Values>
              </LegendBody>
            </Legend>
            <Triad width="52" height="54" viewBox="0 0 52 54">
              <path d="M18 34L20 18" stroke="#2c7a35" strokeWidth="4" />
              <path d="M16 20L21 9L25 20Z" fill="#2c7a35" />
              <path d="M18 34L34 40" stroke="#c42a22" strokeWidth="3" />
              <path d="M34 36L43 42L33 44Z" fill="#d62d25" />
              <path d="M19 34L11 40" stroke="#15158a" strokeWidth="4" />
              <circle cx="10" cy="42" r="4" fill="#1818b4" />
              <text x="19" y="9" fill="#444" fontSize="10">Y</text>
              <text x="42" y="47" fill="#d0413a" fontSize="10">X</text>
              <text x="2" y="49" fill="#222" fontSize="10">Z</text>
            </Triad>
            <TaskPane>
              {["home", "library", "openFolder", "palette", "ball", "properties", "chat"].map((n) => (
                <TaskButton key={n} $active={n === "home"} aria-label={n}><Icon name={n} /></TaskButton>
              ))}
            </TaskPane>
          </Viewport>
        </Workspace>

        <BottomTabs>
          {["first", "prev", "next", "last"].map((n) => (
            <PageButton key={n} aria-label={n}><Icon name={n} size={12} /></PageButton>
          ))}
          <BottomTab $w={54}>Model</BottomTab>
          <BottomTab $w={64}>3D Views</BottomTab>
          <BottomTab $w={95}>Motion Study 1</BottomTab>
          <BottomTab $w={75} $active><Icon name="spark" size={11} />Study 1</BottomTab>
        </BottomTabs>
        <StatusBar>
          <p>SOLIDWORKS Premium 2020 SP0.0</p>
          <StatusItem $gap={0}>Editing Part</StatusItem>
          <StatusItem $gap={26} aria-label="Rebuild warnings"><Icon name="alert" size={15} /></StatusItem>
          <StatusItem $gap={66}>Custom <Caret /></StatusItem>
          <StatusItem $gap={24} aria-label="Tags"><Icon name="tag" size={16} /></StatusItem>
        </StatusBar>
      </Window>
    </Screen>
  );
}
